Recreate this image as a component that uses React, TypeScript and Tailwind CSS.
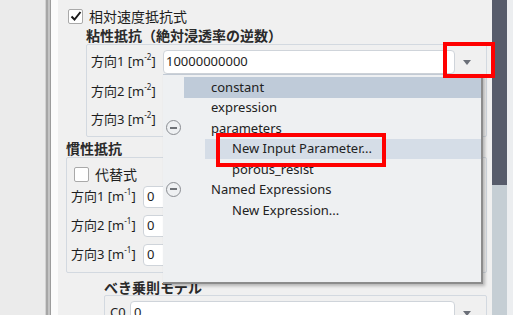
import React from 'react';

const jp = { fontFamily: '"Noto Sans", "Noto Sans CJK JP", sans-serif' };

const Arrow = () => (
  <div className="w-0 h-0 border-l-[4px] border-r-[4px] border-t-[5px] border-l-transparent border-r-transparent border-t-[#6b6f78]" />
);

const Check = ({ checked }: { checked?: boolean }) => (
  <div className="w-[15px] h-[15px] border border-[#a9a9a9] bg-white rounded-[2px] flex items-center justify-center">
    {checked && (
      <svg width="12" height="12" viewBox="0 0 12 12">
        <path d="M1.5 6.5 L4.5 9.5 L10.5 2" stroke="#1a1a1a" strokeWidth="2" fill="none" />
      </svg>
    )}
  </div>
);

const Unit = ({ n, p }: { n: string; p: string }) => (
  <span className="whitespace-nowrap">
    方向{n} [m<span className="text-[8px] relative -top-[6px]">{p}</span>]
  </span>
);

const Minus = () => (
  <div className="w-[15px] h-[15px] rounded-full border-[1.5px] border-[#8a8d92] flex items-center justify-center">
    <div className="w-[7px] h-[2px] bg-[#6f7277]" />
  </div>
);

const TreeRow = ({ text, indent, hl, minus }: { text: string; indent: number; hl?: string; minus?: boolean }) => (
  <div className="h-[20.5px] relative flex items-center">
    {hl && <div className={`absolute top-0 bottom-0 right-0 ${hl}`} style={{ left: indent === 1 ? 21 : 42 }} />}
    {minus && (
      <div className="absolute left-[3px] top-[2px]">
        <Minus />
      </div>
    )}
    <span className="relative" style={{ paddingLeft: indent === 1 ? 48 : 69 }}>{text}</span>
  </div>
);

export default function App() {
  return (
    <div className="w-[513px] h-[315px] overflow-hidden flex relative bg-[#f0f0f0] text-[#1e1e1e]" style={jp}>
      {/* left pane + splitter */}
      <div className="w-[45px] bg-[#ebebeb]" />
      <div className="w-[1px] bg-[#d2d2d2]" />
      <div className="w-[2px] bg-[#a6a6a6]" />
      <div className="w-[2px] bg-[#c4c4c4]" />
      <div className="w-[1px] bg-[#9c9c9c]" />
      <div className="w-[7px] bg-[#fbfbfb]" />

      {/* main panel */}
      <div className="w-[434px] relative">
        <div className="flex items-center gap-[6px] pl-[10px] pt-[8px] h-[24px] text-[14px]">
          <Check checked />
          <span>相対速度抵抗式</span>
        </div>
        <div className="ml-[28px] mt-[3px] h-[17px] flex items-center text-[14px] font-bold text-[#2a2a2a]">粘性抵抗（絶対浸透率の逆数）</div>
        <div className="ml-[28px] w-[401px] h-[93px] border border-[#d3d9e0] rounded-[2px] pt-[5px] pl-[4px] text-[13px]">
          <div className="flex items-center h-[24px]">
            <div className="w-[72px]"><Unit n="1" p="-2" /></div>
            <div className="w-[292px] h-[24px] bg-white border border-[#cfd4da] rounded-[4px] flex items-center pl-[2px]">10000000000</div>
            <div className="ml-[8px]"><Arrow /></div>
          </div>
          <div className="flex items-center h-[28px] mt-[4px]">
            <div className="w-[72px]"><Unit n="2" p="-2" /></div>
          </div>
          <div className="flex items-center h-[28px]">
            <div className="w-[72px]"><Unit n="3" p="-2" /></div>
          </div>
        </div>
        <div className="ml-[8px] mt-[2px] h-[18px] flex items-center text-[14px] font-bold text-[#2a2a2a]">慣性抵抗</div>
        <div className="ml-[8px] w-[421px] h-[116px] border border-[#d3d9e0] rounded-[2px] pl-[7px] pt-[8px] text-[13px]">
          <div className="flex items-center gap-[6px] h-[16px] text-[14px]">
            <Check />
            <span>代替式</span>
          </div>
          <div className="mt-[4px] -ml-[3px] flex flex-col gap-[7px]">
            {['1', '2', '3'].map((n) => (
              <div key={n} className="flex items-center h-[22px]">
                <div className="w-[72px]"><Unit n={n} p="-1" /></div>
                <div className="w-[200px] h-[22px] bg-white border border-[#cfd4da] rounded-[4px] flex items-center pl-[3px]">0</div>
              </div>
            ))}
          </div>
        </div>
        <div className="ml-[46px] mt-[6px] h-[16px] flex items-center text-[14px] font-bold text-[#2a2a2a]">べき乗則モデル</div>
        <div className="ml-[46px] w-[383px] h-[40px] border border-[#d3d9e0] rounded-[2px] pl-[5px] pt-[5px] text-[13px]">
          <div className="flex items-center h-[24px]">
            <div className="w-[20px]">C0</div>
            <div className="w-[325px] h-[24px] bg-white border border-[#cfd4da] rounded-[4px] flex items-center pl-[3px]">0</div>
            <div className="ml-[8px]"><Arrow /></div>
          </div>
        </div>
      </div>

      {/* scrollbar */}
      <div className="w-[15px] flex flex-col">
        <div className="h-[185px] bg-[#575c6b]" />
        <div className="flex-1 bg-[#c5ced4]" />
      </div>
      <div className="flex-1 bg-[#eceef0]" />

      {/* dropdown tree popup */}
      <div
        className="absolute left-[163px] top-[74px] w-[320px] h-[210px] bg-[#eef0f2] border-t border-[#c2cad4] border-r-2 border-b-2 border-r-[#8c8c8c] border-b-[#8c8c8c] shadow-[2px_2px_3px_rgba(0,0,0,0.25)] pt-[2px] text-[13px] text-[#222]"
        style={{ fontFamily: '"Noto Sans", sans-serif' }}
      >
        <TreeRow text="constant" indent={1} hl="bg-[#bfcbd9]" />
        <TreeRow text="expression" indent={1} />
        <TreeRow text="parameters" indent={1} minus />
        <TreeRow text="New Input Parameter..." indent={2} hl="bg-[#d5dde7]" />
        <TreeRow text="porous_resist" indent={2} />
        <TreeRow text="Named Expressions" indent={1} minus />
        <TreeRow text="New Expression..." indent={2} />
      </div>

      {/* red highlight boxes */}
      <div className="absolute left-[443px] top-[42px] w-[52px] h-[36px] border-[4px] border-[#ff0000]" />
      <div className="absolute left-[216px] top-[133px] w-[170px] h-[34px] border-[4px] border-[#ff0000]" />
    </div>
  );
}
